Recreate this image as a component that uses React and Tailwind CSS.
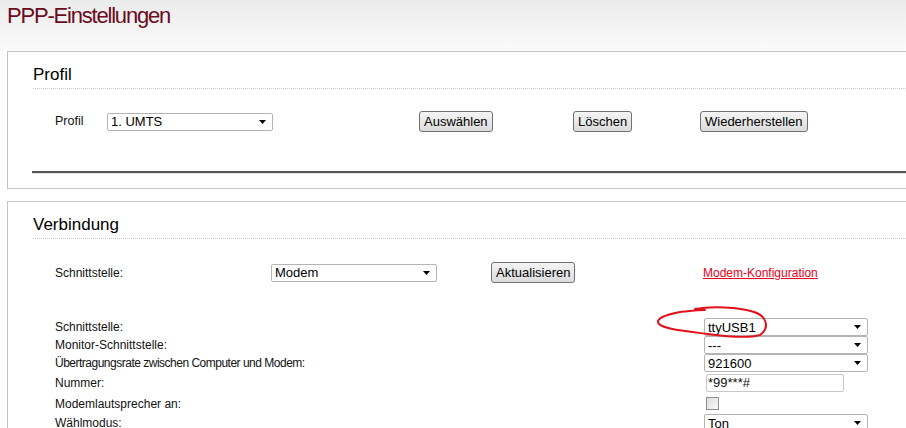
import React from "react";

// kleines Dropdown im Stil des alten Browsers
function FakeSelect({ value, className = "" }) {
    return (
        <div className={"h-[18px] border border-[#b4b4b4] rounded-[2px] bg-white flex items-center justify-between pl-[3px] pr-[6px] text-[13px] leading-none text-black " + className}>
            <span>{value}</span>
            <svg width="7" height="4" viewBox="0 0 7 4">
                <path d="M0 0 H7 L3.5 4 Z" fill="#000" />
            </svg>
        </div>
    );
}

function Btn({ children }) {
    return (
        <button className="h-[21px] px-[4px] border border-[#707070] rounded-[3px] bg-linear-to-b from-[#f4f4f4] to-[#dcdcdc] text-[13px] leading-none text-black">
            {children}
        </button>
    );
}

const rows = [
    { label: "Schnittstelle:", h: "h-[18px]", ctrl: <FakeSelect value="ttyUSB1" className="w-[164px]" /> },
    { label: "Monitor-Schnittstelle:", h: "h-[18px]", ctrl: <FakeSelect value="---" className="w-[164px]" /> },
    { label: "Übertragungsrate zwischen Computer und Modem:", tight: true, h: "h-[18px]", ctrl: <FakeSelect value="921600" className="w-[164px]" /> },
    {
        label: "Nummer:",
        h: "h-[21px]",
        ctrl: (
            <div className="ml-[2px] w-[138px] h-[18px] border border-[#c8c8c8] rounded-[2px] bg-white flex items-center pl-[1px] text-[13px] leading-none">
                *99***#
            </div>
        ),
    },
    {
        label: "Modemlautsprecher an:",
        h: "h-[21px]",
        ctrl: <div className="ml-[2px] w-[13px] h-[13px] border border-[#8f8f8f] bg-linear-to-br from-[#dcdcdc] to-[#f8f8f8]" />,
    },
    { label: "Wählmodus:", h: "h-[18px]", ctrl: <FakeSelect value="Ton" className="w-[164px]" /> },
];

export default function App() {
    return (
        <div className="relative w-[906px] h-[428px] overflow-hidden bg-white text-[#111] font-['Liberation_Sans',Arial,sans-serif]">
            {/* Titel */}
            <div className="h-[51px] bg-linear-to-b from-[#ebebeb] to-[#fbfbfb] pl-[7px] pt-[2px]">
                <h1 className="text-[22px] leading-[28px] tracking-[-1.2px] text-[#6a0c1c]">
                    PPP-Einstellungen
                </h1>
            </div>

            {/* PROFIL */}
            <div className="ml-[7px] h-[138px] border border-r-0 border-[#c4c4c4] pl-[25px] pt-[12px]">
                <h2 className="text-[17px] leading-[21px] text-black pb-[3px] border-b border-dotted border-[#c8c8c8]">Profil</h2>
                <div className="mt-[22px] h-[21px] grid grid-cols-[52px_312px_154px_127px_auto] items-center pl-[22px] text-[12.5px]">
                    <span>Profil</span>
                    <FakeSelect value="1. UMTS" className="w-[166px]" />
                    <div><Btn>Auswählen</Btn></div>
                    <div><Btn>Löschen</Btn></div>
                    <div><Btn>Wiederherstellen</Btn></div>
                </div>
                <div className="mt-[39px] -ml-[1px] border-t-2 border-b border-t-[#555] border-b-[#e4e4e4]" />
            </div>

            {/* VERBINDUNG */}
            <div className="mt-[12px] ml-[7px] h-[300px] border border-r-0 border-[#c4c4c4] pl-[25px] pt-[12px]">
                <h2 className="text-[17px] leading-[21px] text-black pb-[3px] border-b border-dotted border-[#c8c8c8]">Verbindung</h2>
                <div className="mt-[23px] h-[21px] grid grid-cols-[216px_220px_212px_auto] items-center pl-[22px] text-[12px]">
                    <span>Schnittstelle:</span>
                    <FakeSelect value="Modem" className="w-[166px]" />
                    <div><Btn>Aktualisieren</Btn></div>
                    <a href="#" className="text-[#e8001c] underline">Modem-Konfiguration</a>
                </div>

                <div className="mt-[35px] pl-[22px] text-[12px]">
                    {rows.map((r) => (
                        <div key={r.label} className={"grid grid-cols-[649px_auto] items-center " + r.h}>
                            <span className={r.tight ? "tracking-[-0.5px]" : ""}>{r.label}</span>
                            <div>{r.ctrl}</div>
                        </div>
                    ))}
                </div>
            </div>

            {/* rote Markierung */}
            <svg className="absolute left-[650px] top-[300px]" width="125" height="45" viewBox="0 0 125 45">
                <path
                    d="M45 9 C62 6, 88 7, 104 12 C117 16, 120 28, 110 35 C100 38, 80 37, 58 34 C35 31, 14 29, 9 24 C5 19, 14 15, 30 12 C40 11, 48 10, 55 10"
                    fill="none"
                    stroke="#e3101a"
                    strokeWidth="2"
                    strokeLinecap="round"
                />
            </svg>
        </div>
    );
}
